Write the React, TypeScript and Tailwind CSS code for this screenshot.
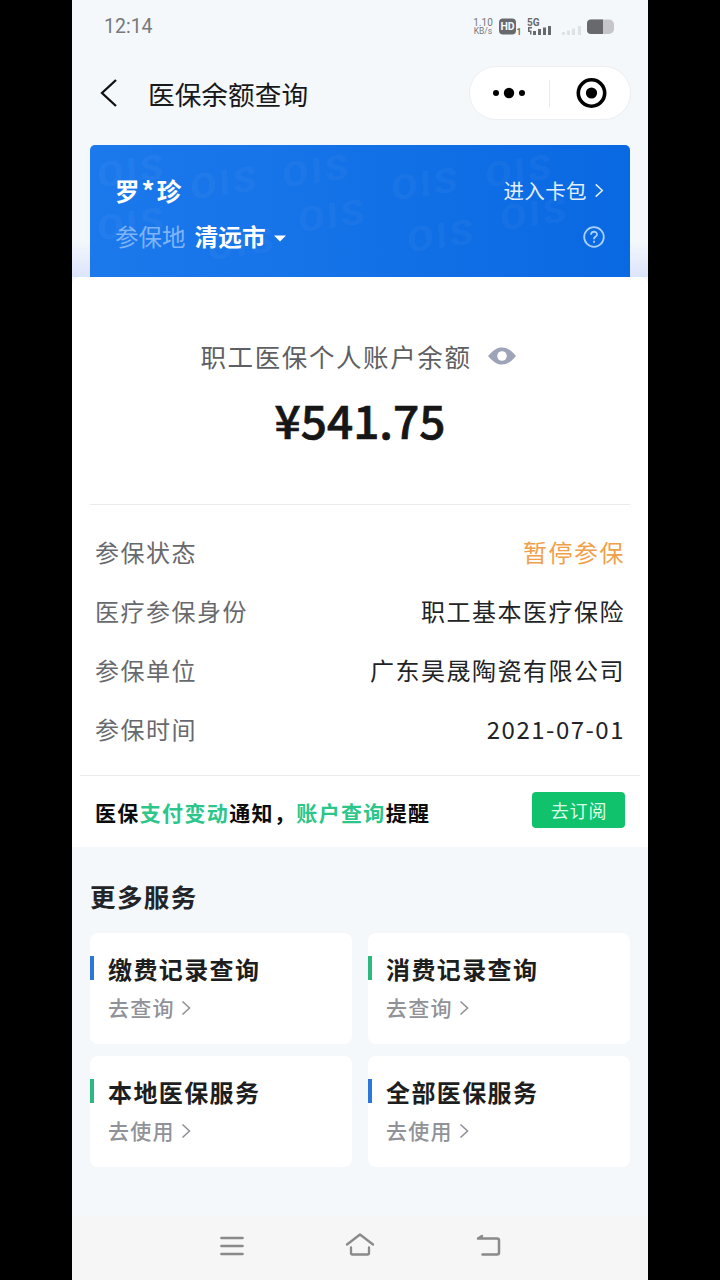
const infoRows = [
  { label: "参保状态", value: "暂停参保", color: "text-[#f0a04b]" },
  { label: "医疗参保身份", value: "职工基本医疗保险", color: "text-[#222326]" },
  { label: "参保单位", value: "广东昊晟陶瓷有限公司", color: "text-[#222326]" },
  { label: "参保时间", value: "2021-07-01", color: "text-[#222326]" },
];

const services = [
  { title: "缴费记录查询", action: "去查询", bar: "bg-[#2b78da]" },
  { title: "消费记录查询", action: "去查询", bar: "bg-[#2bb980]" },
  { title: "本地医保服务", action: "去使用", bar: "bg-[#2bb980]" },
  { title: "全部医保服务", action: "去使用", bar: "bg-[#2b78da]" },
];

const watermarks = [
  { left: 10, top: 9 },
  { left: 103, top: 21 },
  { left: 195, top: 9 },
  { left: 304, top: 22 },
  { left: 398, top: 9 },
  { left: 10, top: 62 },
  { left: 211, top: 54 },
  { left: 320, top: 74 },
  { left: 413, top: 52 },
  { left: 120, top: 82 },
];

function Chevron({ className }: { className: string }) {
  return (
    <svg className={className} viewBox="0 0 10 16" fill="none" stroke="currentColor" strokeWidth="1.6">
      <path d="M1.5 1.5 8.5 8l-7 6.5" />
    </svg>
  );
}

function StatusBar() {
  return (
    <div className="flex h-[54px] items-center justify-between pl-8 pr-[31px] text-[#77797c]">
      <span className="font-[Roboto,sans-serif] text-[19.5px] leading-6">12:14</span>
      <div className="flex items-center">
        <div className="w-[20px] text-center font-[Roboto,sans-serif] leading-[9px] whitespace-nowrap">
          <div className="text-[10px]">1.10</div>
          <div className="text-[8.5px]">KB/s</div>
        </div>
        <svg className="ml-[6px]" width="118" height="20" viewBox="0 0 118 20" fontFamily="Roboto, sans-serif">
          <rect x="0" y="1.5" width="17" height="16" rx="4" fill="#68696c" />
          <text x="8.5" y="13.2" fontSize="10.5" fontWeight="700" fill="#f4f8fb" textAnchor="middle">HD</text>
          <text x="17.5" y="18" fontSize="8.5" fontWeight="700" fill="#68696c">1</text>
          <text x="28" y="8.5" fontSize="10" fontWeight="700" fill="#68696c">5G</text>
          <g fill="#68696c">
            <path d="M29 10h4v1.5h-2.5v2h2v4h-1.5v-2.5h-2z" />
            <rect x="34" y="14" width="3" height="4" />
            <rect x="39" y="12" width="3" height="6" />
            <rect x="44" y="10.5" width="3" height="7.5" />
            <rect x="49" y="9" width="3" height="9" />
          </g>
          <g fill="#dfe2e5">
            <rect x="63" y="15" width="3" height="3" />
            <rect x="68" y="13.5" width="3" height="4.5" />
            <rect x="73" y="11.5" width="3" height="6.5" />
            <rect x="79" y="9" width="3" height="9" />
          </g>
          <rect x="88" y="2.5" width="27" height="14.5" rx="5" fill="#c6c6ca" />
          <path d="M92 2.5h12V17H92a4 4 0 0 1-4-4V6.5a4 4 0 0 1 4-4z" fill="#68696c" />
        </svg>
      </div>
    </div>
  );
}

function TitleBar() {
  return (
    <div className="flex h-[78px] items-center pl-[28px] pr-[17px]">
      <svg width="18" height="30" viewBox="0 0 18 30" fill="none" stroke="#111" strokeWidth="2.3">
        <path d="M16 2 2 15l14 13" />
      </svg>
      <h1 className="ml-[30px] mt-[2px] text-[26.7px] leading-10 text-[#18191b]">医保余额查询</h1>
      <div className="ml-auto flex h-[54px] w-[162px] items-center rounded-full border border-[#eceff2] bg-white">
        <svg width="160" height="52" viewBox="0 0 160 52">
          <circle cx="26" cy="26" r="3" />
          <circle cx="39" cy="26" r="5.2" />
          <circle cx="52" cy="26" r="3" />
          <path d="M79.5 13v27" stroke="#eaeaec" />
          <circle cx="121.5" cy="26" r="13.2" fill="none" stroke="#000" strokeWidth="3.6" />
          <circle cx="121.5" cy="26" r="5.6" />
        </svg>
      </div>
    </div>
  );
}

function InsuranceCard() {
  return (
    <div className="bg-linear-to-b from-transparent from-75% to-[#dce4fb] px-[18px] pt-[13px]">
      <div className="relative h-[132px] overflow-hidden rounded-t-[5px] bg-linear-to-r from-[#1c79ec] to-[#0969e2] pl-[25px] pr-[25px] pt-[26px] text-white">
        {watermarks.map((w) => (
          <span
            key={`${w.left}-${w.top}`}
            className="absolute scale-x-110 -rotate-8 -skew-x-6 font-[Roboto,sans-serif] text-[35px] leading-9 font-black tracking-[2px] text-white/3 select-none"
            style={{ left: w.left, top: w.top }}
          >
            OIS
          </span>
        ))}
        <div className="relative flex h-[38px] items-center justify-between">
          <span className="text-[24.5px] font-bold">
            罗<span className="mx-[2px] text-[26px]">*</span>珍
          </span>
          <span className="flex items-center text-[20.5px] tracking-[0.4px] text-[#e2efff]">
            进入卡包
            <Chevron className="ml-[7px] mr-px h-[15px] w-[10px]" />
          </span>
        </div>
        <div className="relative mt-[9px] flex h-[38px] items-center">
          <span className="text-[23.5px] text-[#7fb4f8]">参保地</span>
          <span className="ml-[9px] text-[23.7px] font-bold">清远市</span>
          <svg className="ml-[8px] mt-[2px]" width="12" height="7" viewBox="0 0 12 7">
            <path d="M0 0.5h12L6 6.5z" fill="#fff" />
          </svg>
          <svg className="ml-auto" width="22" height="22" viewBox="0 0 22 22" fill="none" stroke="#a9d0ff" strokeWidth="1.8">
            <circle cx="11" cy="11" r="9.8" />
            <path d="M8 8.8c0-4 6-4 6-.4 0 2.2-3 2.2-3 4.800" />
            <path d="M11 14.8v2" />
          </svg>
        </div>
      </div>
    </div>
  );
}

function Balance() {
  return (
    <div className="mx-[18px] flex h-[228px] flex-col items-center border-b border-[#e9eaec] pt-[59px]">
      <div className="flex h-10 items-center pr-[3px]">
        <span className="text-[25.5px] tracking-[1.6px] text-[#5e5f62]">职工医保个人账户余额</span>
        <svg className="ml-[15px]" width="30" height="20" viewBox="0 0 30 20">
          <path d="M1 10C7 3 11 1.5 15 1.5S23 3 29 10c-6 7-10 8.5-14 8.5S7 17 1 10z" fill="#9ea4b7" />
          <circle cx="15" cy="10" r="4.8" fill="#fff" />
        </svg>
      </div>
      <div className="mt-[9px] text-[46px] leading-[68px] font-medium text-[#161616] [-webkit-text-stroke:0.7px_#161616]">
        ¥541.75
      </div>
    </div>
  );
}

function Notice() {
  return (
    <div className="mx-2 flex h-[72px] items-center justify-between border-t border-[#ececee] px-[15px]">
      <p className="mt-[3px] text-[21px] font-bold tracking-[1.36px] text-[#0c0c0d]">
        医保<span className="text-[#2cc68a]">支付变动</span>通知，<span className="text-[#2cc68a]">账户查询</span>提醒
      </p>
      <button className="-mt-[3px] h-9 w-[93px] rounded-[4px] bg-[#10c26c] pl-px text-[18px] leading-9 tracking-[0.8px] text-[#d9fae8]">
        去订阅
      </button>
    </div>
  );
}

function Services() {
  return (
    <div className="px-[18px] pt-[29px]">
      <h2 className="text-[25.5px] leading-10 font-bold tracking-[1.4px] text-[#232428]">更多服务</h2>
      <div className="mt-[17px] grid grid-cols-2 gap-x-4 gap-y-3">
        {services.map((s) => (
          <div key={s.title} className="h-[111px] rounded-lg bg-white pt-[17px]">
            <div className="flex h-9 items-center">
              <span className={`h-[24px] w-[4px] ${s.bar}`} />
              <span className="ml-[14px] mt-[2px] text-[24px] font-bold tracking-[1.4px] text-[#1d1e20]">{s.title}</span>
            </div>
            <div className="mt-[6px] flex h-8 items-center pl-[18px] text-[21px] font-medium tracking-[1.2px] text-[#919297]">
              {s.action}
              <Chevron className="ml-[6px] h-4 w-[10px]" />
            </div>
          </div>
        ))}
      </div>
    </div>
  );
}

function NavBar() {
  return (
    <div className="mt-auto flex h-[64px] items-center justify-center gap-24 bg-[#f6f6f6] pb-1">
      <svg width="32" height="28" viewBox="0 0 32 28" fill="none" stroke="#8b8989" strokeWidth="2.7" strokeLinecap="round">
        <path d="M5.5 6h21M5.5 14h21M5.5 22h21" />
      </svg>
      <svg width="32" height="28" viewBox="0 0 32 28" fill="none" stroke="#8b8989" strokeWidth="2.3" strokeLinecap="round" strokeLinejoin="round">
        <path d="M3 12.5 16 2.5 29 12.5M7 15.5v5.5q0 1.5 1.5 1.5h15q1.5 0 1.5-1.5v-5.5" />
      </svg>
      <svg width="32" height="28" viewBox="0 0 32 28" fill="none" stroke="#8b8989" strokeWidth="2.5" strokeLinecap="round" strokeLinejoin="round">
        <path d="M10 4 6 6.5h19q2 0 2 2v12q0 2-2 2H10.500" />
      </svg>
    </div>
  );
}

export default function App() {
  return (
    <div className="h-[1280px] w-[720px] bg-black px-[72px] font-['Noto_Sans_CJK_SC',sans-serif]">
      <div className="flex h-full flex-col bg-[#f4f8fb]">
        <StatusBar />
        <TitleBar />
        <InsuranceCard />
        <div className="h-[570px] rounded-t-[8px] bg-white">
          <Balance />
          <div className="flex h-[270px] flex-col pl-[23px] pr-[23px] pt-[17px]">
            {infoRows.map((row) => (
              <div key={row.label} className="flex h-[59px] items-center justify-between text-[24px] tracking-[1.5px]">
                <span className="text-[#68696d]">{row.label}</span>
                <span className={row.color}>{row.value}</span>
              </div>
            ))}
          </div>
          <Notice />
        </div>
        <Services />
        <NavBar />
      </div>
    </div>
  );
}
